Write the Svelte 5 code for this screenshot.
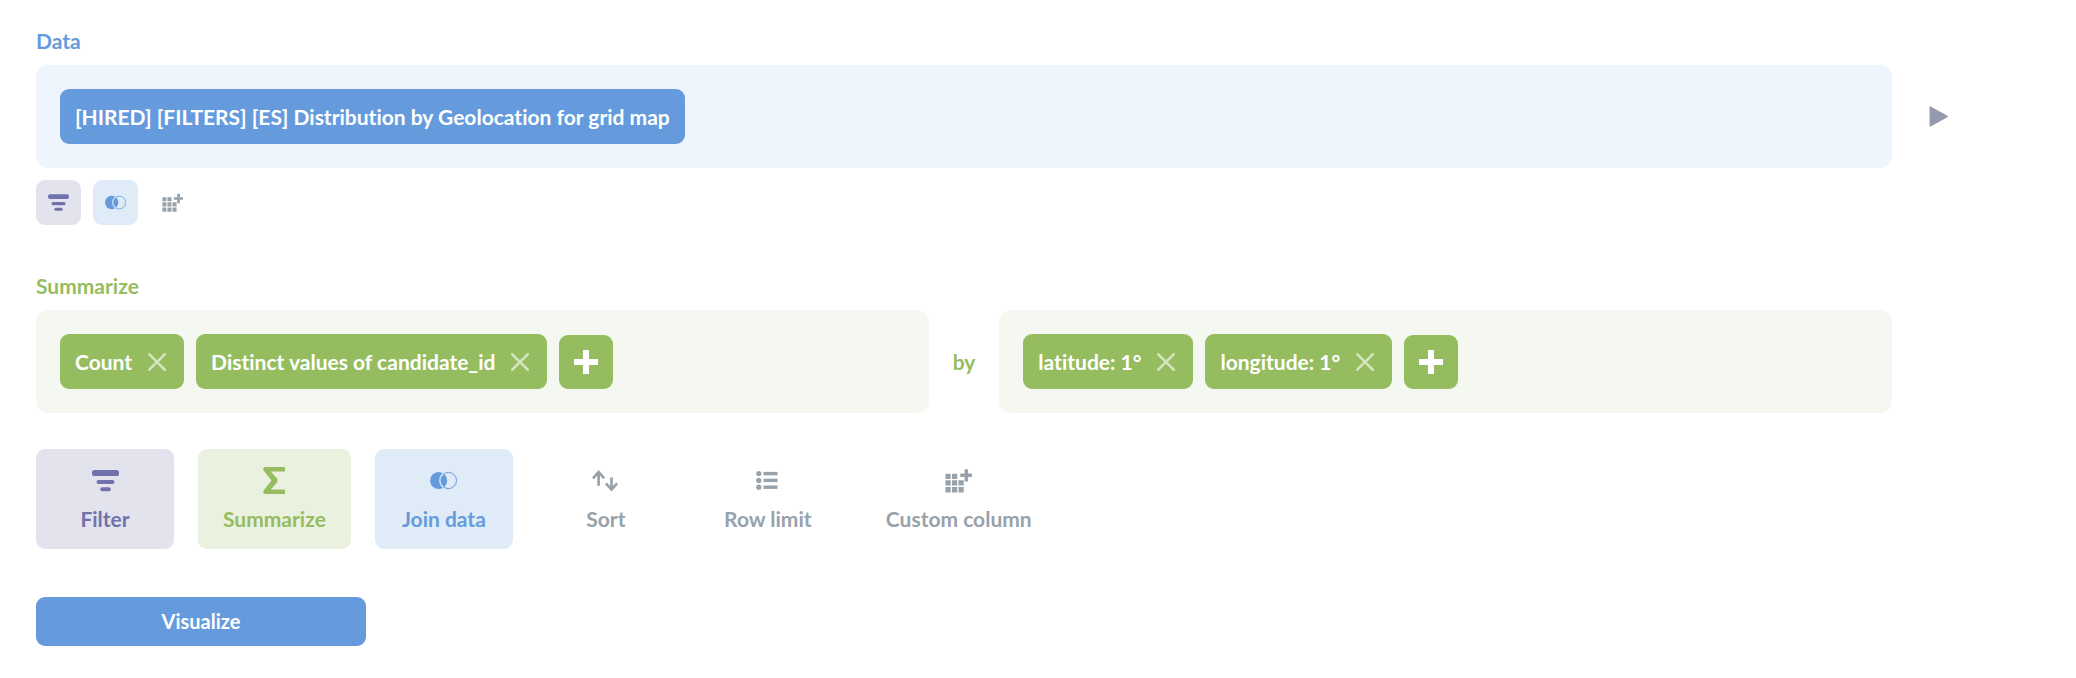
<script lang="ts">
  type Action = { icon: string; label: string; color: string };

  const source = "[HIRED] [FILTERS] [ES] Distribution by Geolocation for grid map";

  let aggregations = $state(["Count", "Distinct values of candidate_id"]);
  let breakouts = $state(["latitude: 1°", "longitude: 1°"]);

  const dataActions: Action[] = [
    { icon: "filter", label: "Filter", color: "purple" },
    { icon: "join", label: "Join data", color: "blue" },
    { icon: "column", label: "Custom column", color: "grey" },
  ];

  const actions: Action[] = [
    { icon: "filter", label: "Filter", color: "purple" },
    { icon: "sum", label: "Summarize", color: "green" },
    { icon: "join", label: "Join data", color: "blue" },
    { icon: "sort", label: "Sort", color: "grey" },
    { icon: "list", label: "Row limit", color: "grey" },
    { icon: "column", label: "Custom column", color: "grey" },
  ];
</script>

{#snippet icon(name: string, size: number)}
  <svg width={size} height={size} viewBox="0 0 27 27" fill="currentColor" aria-hidden="true">
    {#if name === "filter"}
      <rect x="0" y="3" width="27" height="6" rx="2.6" />
      <rect x="4.5" y="13" width="18" height="4" rx="2" />
      <rect x="8.2" y="20.2" width="10.6" height="4" rx="2" />
    {:else if name === "sum"}
      <path d="M3.5 0H24v4.6H9.8l6.6 7.4v3l-6.6 7.4H24V27H3.5L2.2 25.3V24l8.3-10.5L2.2 3V1.7z" />
    {:else if name === "join"}
      <clipPath id="join-left-{size}"><circle cx="8.6" cy="13.5" r="8.6" /></clipPath>
      <circle cx="8.6" cy="13.5" r="8.6" />
      <circle cx="18.4" cy="13.5" r="8.1" fill="none" stroke="currentColor" />
      <circle
        class="ring"
        cx="18.4"
        cy="13.5"
        r="8.6"
        fill="none"
        stroke-width="1.4"
        clip-path="url(#join-left-{size})"
      />
    {:else if name === "sort"}
      <g fill="none" stroke="currentColor" stroke-width="2.7">
        <path d="M6.6 18.8V5M1 11.4 6.6 5l5.6 6.4" />
        <path d="M19.5 10.6v12M13.9 16.4l5.6 6.2 5.6-6.2" />
      </g>
    {:else if name === "list"}
      {#each [6.6, 13.4, 20.2] as y}
        <circle cx="4.8" cy={y} r="2.6" />
        <rect x="9.5" y={y - 1.7} width="14" height="3.4" />
      {/each}
    {:else if name === "column"}
      <path
        d="M.5 6.7h5.2v5.2H.5zM7 6.7h5.2v5.2H7zM.5 13.3h5.2v5.2H.5zM7 13.3h5.2v5.2H7zM13.5 13.3h5.2v5.2h-5.2zM.5 20h5.2v5.4H.5zM7 20h5.2v5.4H7zM13.5 20h5.2v5.4h-5.2z"
      />
      <path d="M19.6 2.3h3.5v4.3H27v3.5h-3.9v4.3h-3.5v-4.3h-4.3V6.6h4.3z" />
    {:else if name === "add"}
      <path d="M10.1 0h6.8v10.1H27v6.8H16.9V27h-6.8V16.9H0v-6.8h10.1z" />
    {:else if name === "close"}
      <path
        d="M2 2l23 23M25 2 2 25"
        stroke="currentColor"
        stroke-width="4"
        stroke-linecap="round"
      />
    {:else if name === "play"}
      <path d="M2 1.2Q2 0 3.4.6L25 12.4q1.4 1.1 0 2.2L3.4 26.4Q2 27 2 25.8z" />
    {/if}
  </svg>
{/snippet}

{#snippet clauses(items: string[], addLabel: string)}
  <div class="cell green">
    {#each items as item, i}
      <div class="clause">
        <span>{item}</span>
        <button class="remove" aria-label="Remove {item}" onclick={() => items.splice(i, 1)}>
          {@render icon("close", 18)}
        </button>
      </div>
    {/each}
    <button class="add" aria-label={addLabel}>{@render icon("add", 24)}</button>
  </div>
{/snippet}

<main class="notebook">
  <section class="step">
    <h2 class="title blue">Data</h2>
    <div class="row">
      <div class="cell blue">
        <button class="clause">{source}</button>
      </div>
      <div class="preview">
        <button class="play" aria-label="Preview">{@render icon("play", 21)}</button>
      </div>
    </div>
    <div class="small-actions">
      {#each dataActions as action}
        <button class="action small {action.color}" aria-label={action.label}>
          {@render icon(action.icon, 21)}
        </button>
      {/each}
    </div>
  </section>

  <section class="step">
    <h2 class="title green">Summarize</h2>
    <div class="row">
      {@render clauses(aggregations, "Add a metric")}
      <span class="by">by</span>
      {@render clauses(breakouts, "Add a grouping")}
      <div class="preview"></div>
    </div>
  </section>

  <div class="actions">
    {#each actions as action}
      <button class="action {action.color}">
        {@render icon(action.icon, 27)}
        <span>{action.label}</span>
      </button>
    {/each}
  </div>

  <button class="visualize">Visualize</button>
</main>

<style>
  :global(body) {
    margin: 0;
    background: #fff;
  }
  .notebook {
    padding: 28px 0 24px 36px;
    font: 700 21px/25px Lato, sans-serif;
    font-variant-ligatures: none;
  }
  button {
    margin: 0;
    padding: 0;
    border: 0;
    background: none;
    color: inherit;
    font: inherit;
    font-variant-ligatures: none;
    cursor: pointer;
  }
  svg {
    display: block;
    flex-shrink: 0;
  }
  .step + .step {
    margin-top: 48px;
  }
  .title {
    margin: 0 0 12px;
    font: inherit;
  }
  .title.blue {
    color: #659bdd;
  }
  .title.green {
    color: #95bd60;
  }
  .row {
    display: flex;
    align-items: center;
  }
  .cell {
    display: flex;
    flex: 1 1 0;
    align-items: flex-end;
    gap: 12px;
    padding: 24px;
    border-radius: 12px;
  }
  .cell.blue {
    background: #eef5fd;
  }
  .cell.green {
    background: #f5f8f0;
  }
  .clause {
    display: flex;
    align-items: center;
    gap: 16px;
    padding: 15px;
    border-radius: 9px;
    color: #fff;
  }
  .blue .clause {
    background: #659bdd;
  }
  .green .clause {
    padding-right: 18px;
    background: #95bd60;
  }
  .remove {
    opacity: 0.6;
  }
  .add {
    padding: 15px;
    border-radius: 9px;
    background: #95bd60;
    color: #fff;
  }
  .by {
    margin: 0 24px;
    color: #95bd60;
  }
  .preview {
    width: 184px;
  }
  .play {
    display: block;
    margin-left: 36px;
    color: #949aab;
  }
  .small-actions {
    display: flex;
    gap: 12px;
    margin-top: 12px;
  }
  .actions {
    display: flex;
    gap: 24px;
    margin-top: 36px;
  }
  .action {
    display: flex;
    flex-direction: column;
    align-items: center;
    gap: 12px;
    min-width: 138px;
    padding: 18px 25px;
    border-radius: 9px;
  }
  .action.small {
    min-width: 0;
    padding: 12px;
  }
  .action.purple {
    background: #e3e3ed;
    color: #7172ad;
  }
  .action.green {
    background: #eaf1df;
    color: #95bd60;
  }
  .action.blue {
    background: #dfebf7;
    color: #659bdd;
  }
  .action.grey {
    color: #97a2ab;
  }
  .ring {
    stroke: #dfebf7;
  }
  .visualize {
    display: block;
    width: 330px;
    margin-top: 48px;
    padding: 12px;
    border-radius: 9px;
    background: #659bdd;
    color: #fff;
    font-size: 20px;
  }
</style>
